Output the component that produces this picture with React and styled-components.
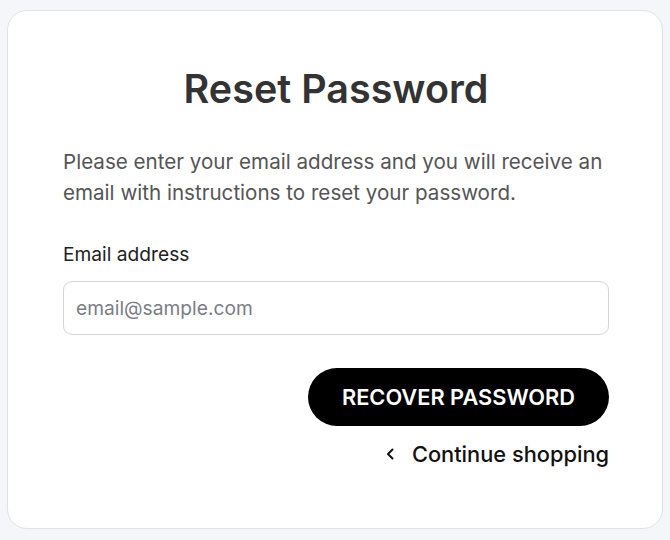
import React from 'react';
import styled, { createGlobalStyle } from 'styled-components';

const GlobalStyle = createGlobalStyle`
    html, body {
        margin: 0;
        padding: 0;
        background: #f5f6fa;
        font-family: Inter, "Noto Sans", sans-serif;
    }
`;

const Page = styled.div`
    padding: 10px 7px 11px 7px;
    box-sizing: border-box;
    width: 670px;
    height: 540px;
`;

const Card = styled.div`
    background: #fff;
    border: 1px solid #e2e2e6;
    border-radius: 20px;
    height: 100%;
    box-sizing: border-box;
    padding: 55px 53px 0 55px;
    display: flex;
    flex-direction: column;
`;

const Title = styled.h1`
    margin: 0;
    text-align: center;
    font-size: 39.5px;
    font-weight: 600;
    color: #333;
    line-height: 1.2;
`;

const Intro = styled.p`
    margin: 34px 0 0 0;
    font-size: 20.6px;
    line-height: 30.5px;
    color: #555;
`;

const Label = styled.label`
    margin-top: 33px;
    font-size: 19.2px;
    color: #222;
    line-height: 26px;
`;

const Input = styled.input`
    margin-top: 14px;
    height: 54px;
    border: 1px solid #d4d6dc;
    border-radius: 9px;
    padding: 0 12px;
    font-family: inherit;
    font-size: 19.2px;
    color: #333;
    box-sizing: border-box;
    outline: none;
    &::placeholder {
        color: #7a7d85;
    }
`;

const Actions = styled.div`
    margin-top: 33px;
    display: flex;
    flex-direction: column;
    align-items: flex-end;
    gap: 15px;
`;

const Button = styled.button`
    height: 58px;
    padding: 0 34px;
    border: none;
    border-radius: 29px;
    background: #000;
    color: #fff;
    font-family: inherit;
    font-size: 21.8px;
    font-weight: 600;
    text-transform: uppercase;
    cursor: pointer;
`;

const BackLink = styled.a`
    display: flex;
    align-items: center;
    gap: 15px;
    font-size: 21.8px;
    font-weight: 500;
    line-height: 26px;
    color: #111;
    text-decoration: none;
    cursor: pointer;
`;

function Chevron() {
    return (
        <svg width="12" height="14" viewBox="0 0 12 14" fill="none">
            <path d="M7.5 2.5 L3 7 L7.5 11.5" stroke="#111" strokeWidth="2" strokeLinecap="round" strokeLinejoin="round" />
        </svg>
    );
}

function App() {
    return (
        <Page>
            <GlobalStyle />
            <Card>
                <Title>Reset Password</Title>
                <Intro>
                    Please enter your email address and you will receive an email with instructions to reset your password.
                </Intro>
                <Label htmlFor="email">Email address</Label>
                <Input id="email" type="email" placeholder="email@sample.com" />
                <Actions>
                    <Button>Recover password</Button>
                    <BackLink>
                        <Chevron />
                        Continue shopping
                    </BackLink>
                </Actions>
            </Card>
        </Page>
    );
}

export default App;
